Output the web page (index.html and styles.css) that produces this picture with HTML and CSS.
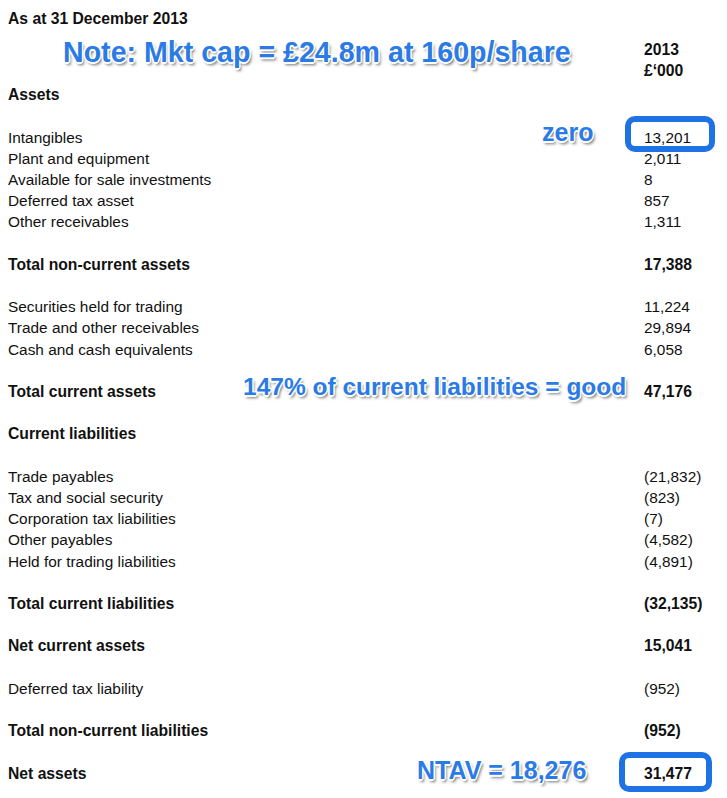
FILE: index.html
```html
<!DOCTYPE html>
<html>
<head>
<meta charset="utf-8">
<link rel="stylesheet" href="styles.css">
</head>
<body>
<div class="sheet">
  <div class="row title"><span class="b">As at 31 December 2013</span></div>
  <div class="row head"><span></span><span class="b">2013<br>£‘000</span></div>
  <div class="row section"><span class="b">Assets</span></div>
  <div class="gap"></div>
  <div class="row"><span>Intangibles</span><span>13,201</span></div>
  <div class="row"><span>Plant and equipment</span><span>2,011</span></div>
  <div class="row"><span>Available for sale investments</span><span>8</span></div>
  <div class="row"><span>Deferred tax asset</span><span>857</span></div>
  <div class="row"><span>Other receivables</span><span>1,311</span></div>
  <div class="gap"></div>
  <div class="row b"><span>Total non-current assets</span><span>17,388</span></div>
  <div class="gap"></div>
  <div class="row"><span>Securities held for trading</span><span>11,224</span></div>
  <div class="row"><span>Trade and other receivables</span><span>29,894</span></div>
  <div class="row"><span>Cash and cash equivalents</span><span>6,058</span></div>
  <div class="gap"></div>
  <div class="row b"><span>Total current assets</span><span>47,176</span></div>
  <div class="gap"></div>
  <div class="row b"><span>Current liabilities</span><span></span></div>
  <div class="gap"></div>
  <div class="row"><span>Trade payables</span><span>(21,832)</span></div>
  <div class="row"><span>Tax and social security</span><span>(823)</span></div>
  <div class="row"><span>Corporation tax liabilities</span><span>(7)</span></div>
  <div class="row"><span>Other payables</span><span>(4,582)</span></div>
  <div class="row"><span>Held for trading liabilities</span><span>(4,891)</span></div>
  <div class="gap"></div>
  <div class="row b"><span>Total current liabilities</span><span>(32,135)</span></div>
  <div class="gap"></div>
  <div class="row b"><span>Net current assets</span><span>15,041</span></div>
  <div class="gap"></div>
  <div class="row"><span>Deferred tax liability</span><span>(952)</span></div>
  <div class="gap"></div>
  <div class="row b"><span>Total non-current liabilities</span><span>(952)</span></div>
  <div class="gap"></div>
  <div class="row b"><span>Net assets</span><span>31,477</span></div>
</div>

<div class="note note-cap">Note: Mkt cap = £24.8m at 160p/share</div>
<div class="note note-zero">zero</div>
<div class="note note-ratio">147% of current liabilities = good</div>
<div class="note note-ntav">NTAV = 18,276</div>
<div class="ring ring-intang"></div>
<div class="ring ring-net"></div>
</body>
</html>
```
FILE: styles.css
```css
html, body {
  margin: 0;
  padding: 0;
  background: #fff;
}
body {
  position: relative;
  width: 727px;
  height: 798px;
  overflow: hidden;
  font-family: "Liberation Sans", Arial, sans-serif;
  color: #111;
}
.sheet {
  padding: 8px 0 0 8px;
}
.row {
  display: grid;
  grid-template-columns: 636px 1fr;
  font-size: 15.4px;
  line-height: 21.2px;
  white-space: nowrap;
}
.b, .row.b {
  font-weight: bold;
  font-size: 15.7px;
}
.head {
  margin-top: 10px;
}
.section {
  margin-top: 2.6px;
}
.gap {
  height: 21.2px;
}
.note {
  position: absolute;
  font-family: "Liberation Sans", Arial, sans-serif;
  font-weight: bold;
  color: #2a7be6;
  white-space: nowrap;
  line-height: 1;
  text-shadow:
    -1px -1px 0 #fff, 1px -1px 0 #fff, -1px 1px 0 #fff, 1px 1px 0 #fff,
    0 -1.5px 0 #fff, 0 1.5px 0 #fff, -1.5px 0 0 #fff, 1.5px 0 0 #fff,
    2px 3px 3px rgba(0, 0, 0, 0.55);
}
.note-cap {
  left: 63px;
  top: 38px;
  font-size: 28.6px;
}
.note-zero {
  left: 542px;
  top: 120px;
  font-size: 25px;
}
.note-ratio {
  left: 243px;
  top: 375px;
  font-size: 24.5px;
}
.note-ntav {
  left: 417px;
  top: 758px;
  font-size: 25px;
}
.ring {
  position: absolute;
  border: 6px solid #1f72e4;
  border-radius: 10px;
  box-sizing: border-box;
}
.ring-intang {
  left: 625px;
  top: 116px;
  width: 90px;
  height: 36px;
}
.ring-net {
  left: 619px;
  top: 752px;
  width: 93px;
  height: 40px;
}
```
